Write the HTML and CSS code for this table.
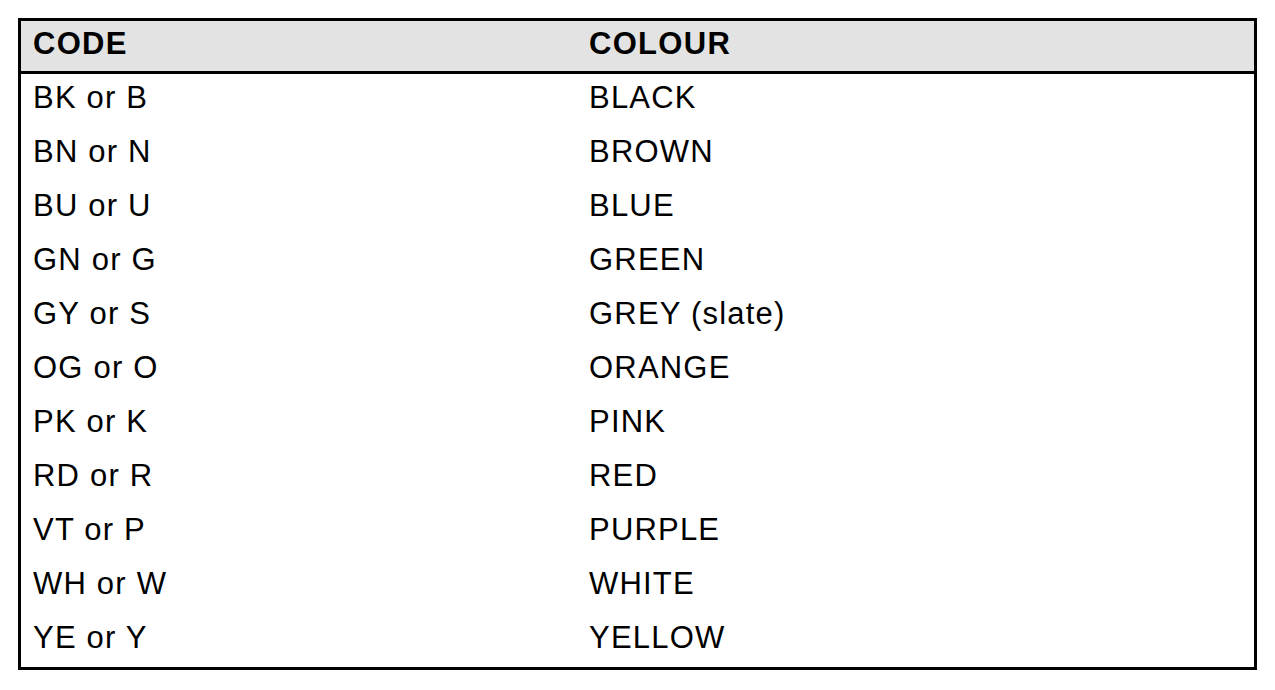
FILE: index.html
```html
<!DOCTYPE html>
<html>
<head>
<meta charset="utf-8">
<link rel="stylesheet" href="styles.css">
<title>Colour codes</title>
</head>
<body>
<div class="table">
  <div class="row head"><div class="cell">CODE</div><div class="cell">COLOUR</div></div>
  <div class="row"><div class="cell">BK or B</div><div class="cell">BLACK</div></div>
  <div class="row"><div class="cell">BN or N</div><div class="cell">BROWN</div></div>
  <div class="row"><div class="cell">BU or U</div><div class="cell">BLUE</div></div>
  <div class="row"><div class="cell">GN or G</div><div class="cell">GREEN</div></div>
  <div class="row"><div class="cell">GY or S</div><div class="cell">GREY (slate)</div></div>
  <div class="row"><div class="cell">OG or O</div><div class="cell">ORANGE</div></div>
  <div class="row"><div class="cell">PK or K</div><div class="cell">PINK</div></div>
  <div class="row"><div class="cell">RD or R</div><div class="cell">RED</div></div>
  <div class="row"><div class="cell">VT or P</div><div class="cell">PURPLE</div></div>
  <div class="row"><div class="cell">WH or W</div><div class="cell">WHITE</div></div>
  <div class="row last"><div class="cell">YE or Y</div><div class="cell">YELLOW</div></div>
</div>
</body>
</html>
```
FILE: styles.css
```css
html, body {
  margin: 0;
  background: #ffffff;
}
body {
  padding: 18px;
  font-family: "Liberation Sans", Arial, sans-serif;
  color: #000;
}
.table {
  width: 1239px;
  box-sizing: border-box;
  border: 3px solid #000;
  display: flex;
  flex-direction: column;
}
.row {
  display: grid;
  grid-template-columns: 556px 1fr;
  height: 54px;
  box-sizing: border-box;
}
.row.last {
  height: 53px;
}
.cell {
  font-size: 31px;
  line-height: 35px;
  letter-spacing: 1.2px;
  padding: 6px 12px 0;
  white-space: nowrap;
}
.head {
  height: 53px;
  background: #e3e3e3;
  border-bottom: 3px solid #000;
}
.head .cell {
  font-weight: bold;
  letter-spacing: 1.3px;
  padding-top: 5px;
}
```
